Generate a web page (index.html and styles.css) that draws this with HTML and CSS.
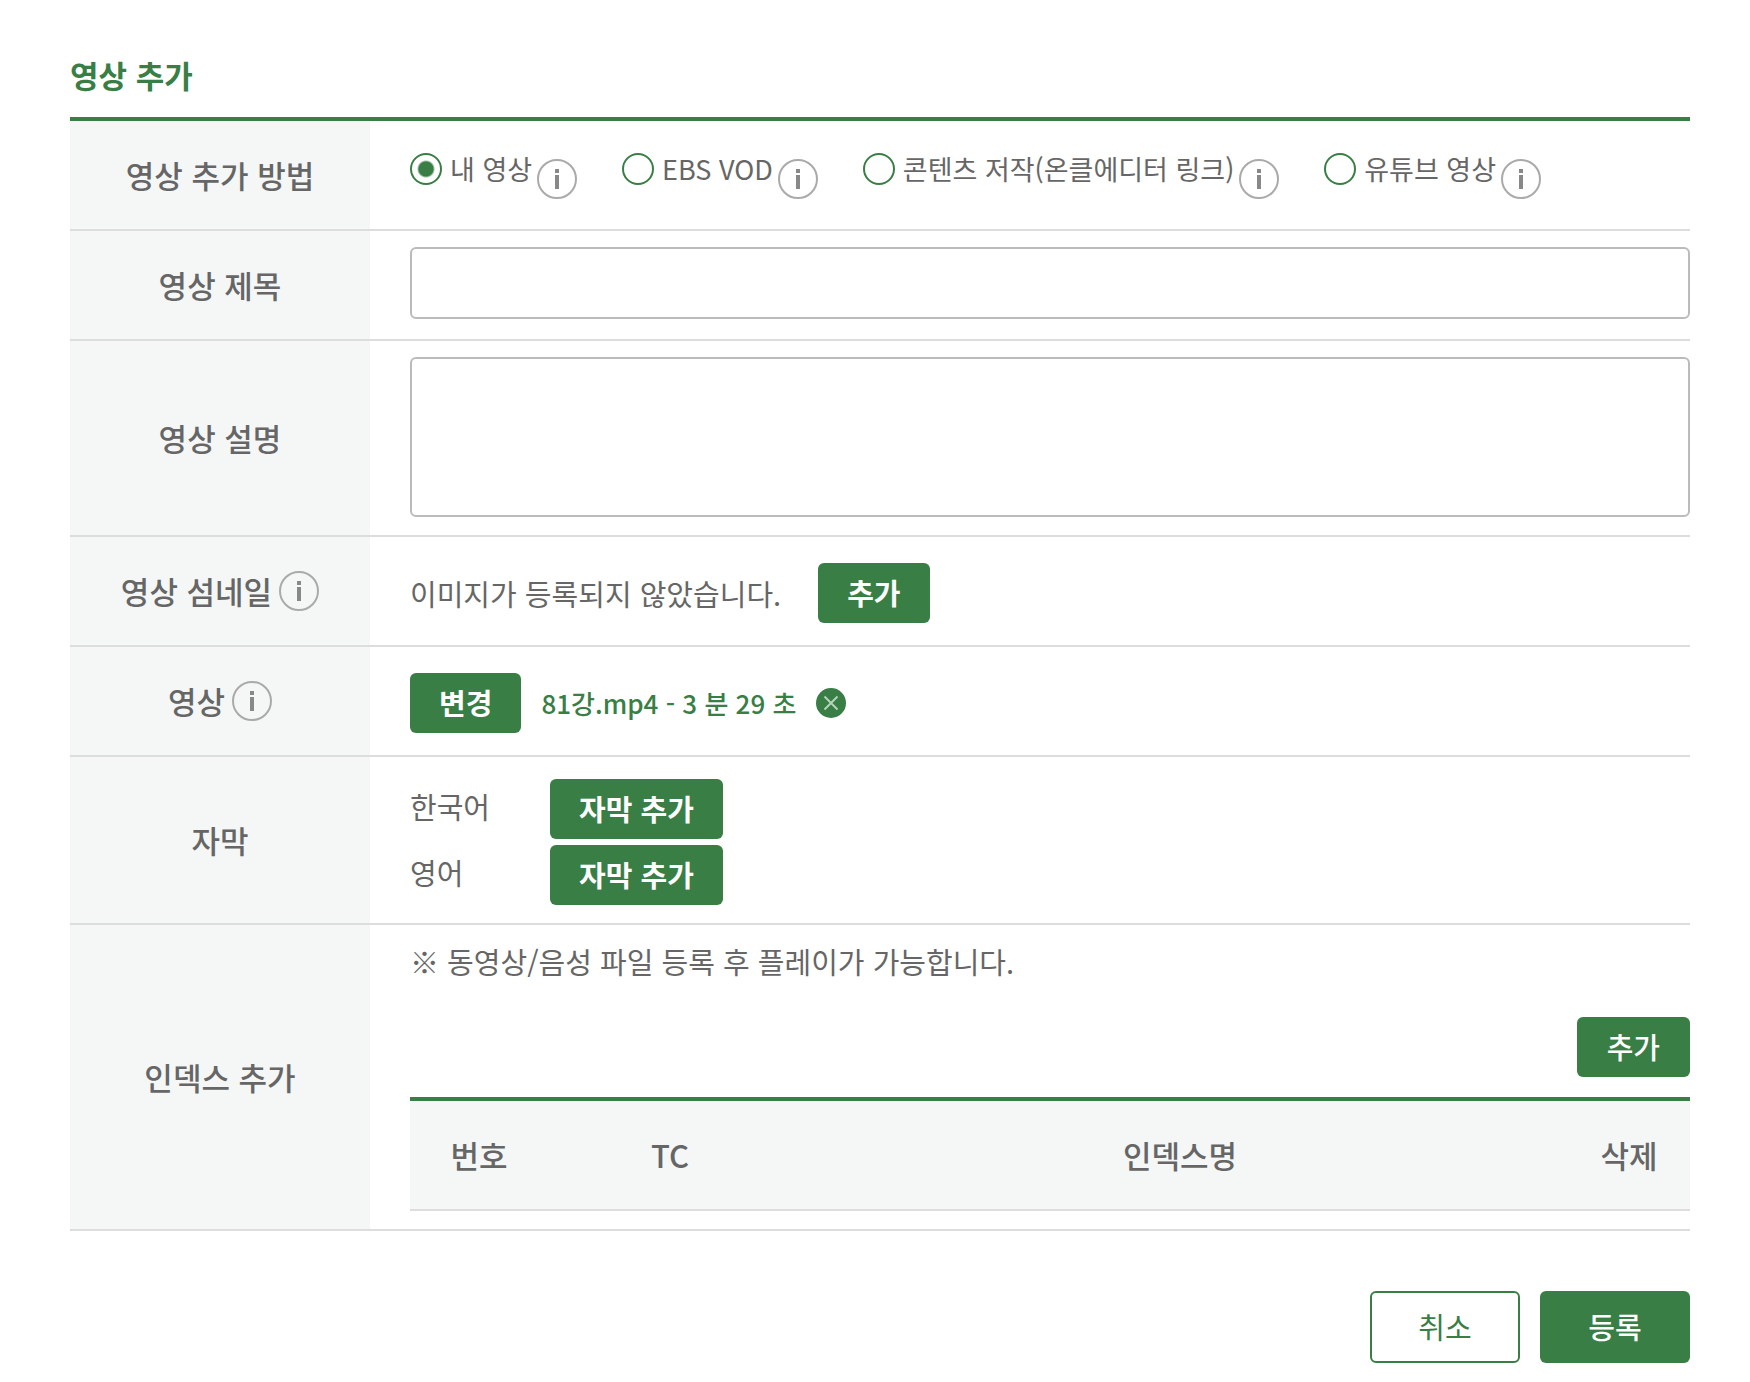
FILE: index.html
```html
<!DOCTYPE html>
<html lang="ko">
<head>
<meta charset="utf-8">
<meta name="viewport" content="width=device-width, initial-scale=1">
<title>영상 추가</title>
<link rel="stylesheet" href="styles.css">
</head>
<body>
<svg class="symbols" aria-hidden="true">
  <symbol id="info" viewBox="0 0 40 40">
    <circle cx="20" cy="20" r="19" fill="none" stroke="#aaa" stroke-width="2"/>
    <path d="M20 10v4M20 16v14" fill="none" stroke="#888" stroke-width="4"/>
  </symbol>
  <symbol id="remove" viewBox="0 0 30 30">
    <circle cx="15" cy="15" r="15" fill="#397e45"/>
    <path d="M8.500 8.500l13 13M21.500 8.500l-13 13" fill="none" stroke="#b5d2ba" stroke-width="2"/>
  </symbol>
</svg>
<main class="page">
  <h1 class="title">영상 추가</h1>
  <form class="form">
    <div class="row">
      <div class="head" id="method-label">영상 추가 방법</div>
      <div class="body methods" role="radiogroup" aria-labelledby="method-label">
        <div class="method">
          <label class="option"><input class="radio" type="radio" name="method" checked>내 영상</label>
          <button class="info" type="button" aria-label="도움말"><svg><use href="#info"/></svg></button>
        </div>
        <div class="method">
          <label class="option"><input class="radio" type="radio" name="method">EBS VOD</label>
          <button class="info" type="button" aria-label="도움말"><svg><use href="#info"/></svg></button>
        </div>
        <div class="method">
          <label class="option"><input class="radio" type="radio" name="method">콘텐츠 저작(온클에디터 링크)</label>
          <button class="info" type="button" aria-label="도움말"><svg><use href="#info"/></svg></button>
        </div>
        <div class="method">
          <label class="option"><input class="radio" type="radio" name="method">유튜브 영상</label>
          <button class="info" type="button" aria-label="도움말"><svg><use href="#info"/></svg></button>
        </div>
      </div>
    </div>
    <div class="row">
      <label class="head" for="video-title">영상 제목</label>
      <div class="body field"><input class="input" id="video-title" type="text"></div>
    </div>
    <div class="row">
      <label class="head" for="video-desc">영상 설명</label>
      <div class="body field"><textarea class="input textarea" id="video-desc"></textarea></div>
    </div>
    <div class="row">
      <div class="head">영상 섬네일<button class="info" type="button" aria-label="도움말"><svg><use href="#info"/></svg></button></div>
      <div class="body media thumb"><span>이미지가 등록되지 않았습니다.</span><button class="btn" type="button">추가</button></div>
    </div>
    <div class="row">
      <div class="head">영상<button class="info" type="button" aria-label="도움말"><svg><use href="#info"/></svg></button></div>
      <div class="body media">
        <button class="btn" type="button">변경</button>
        <span class="file">81강.mp4 - 3 분 29 초</span>
        <button class="remove" type="button" aria-label="삭제"><svg><use href="#remove"/></svg></button>
      </div>
    </div>
    <div class="row">
      <div class="head">자막</div>
      <div class="body captions">
        <div class="caption"><span>한국어</span><button class="btn" type="button">자막 추가</button></div>
        <div class="caption"><span>영어</span><button class="btn" type="button">자막 추가</button></div>
      </div>
    </div>
    <div class="row">
      <div class="head">인덱스 추가</div>
      <div class="body index">
        <p class="note">※ 동영상/음성 파일 등록 후 플레이가 가능합니다.</p>
        <button class="btn light" type="button">추가</button>
        <table class="table">
          <thead>
            <tr><th class="col-no">번호</th><th class="col-tc">TC</th><th>인덱스명</th><th class="col-del">삭제</th></tr>
          </thead>
        </table>
      </div>
    </div>
    <div class="actions">
      <button class="btn large outline" type="button">취소</button>
      <button class="btn large" type="submit">등록</button>
    </div>
  </form>
</main>
</body>
</html>
```
FILE: styles.css
```css
* {
  box-sizing: border-box;
}

body {
  margin: 0;
  background: #fff;
  color: #666;
  font-family: "Noto Sans CJK KR", "Noto Sans", sans-serif;
  font-size: 29px;
  line-height: 40px;
}

button,
input,
textarea {
  margin: 0;
  font: inherit;
}

button {
  padding: 0;
  border: 0;
  background: none;
  cursor: pointer;
}

.symbols {
  display: none;
}

.page {
  padding: 55px 60px 16px 70px;
}

.title {
  margin: 0 0 22px;
  color: #397e45;
  font-size: 31px;
  font-weight: 700;
  line-height: 40px;
}

.form {
  border-top: 4px solid #397e45;
}

.row {
  display: grid;
  grid-template-columns: 300px 1fr;
  border-bottom: 2px solid #ddd;
}

.head {
  display: flex;
  align-items: center;
  justify-content: center;
  gap: 7px;
  background: #f4f7f6;
  font-size: 31px;
  font-weight: 500;
}

.body {
  min-width: 0;
  padding-left: 40px;
}

.info {
  flex: none;
  width: 40px;
  height: 40px;
}

.info svg,
.remove svg {
  display: block;
  width: 100%;
  height: 100%;
}

.methods {
  display: flex;
  flex-wrap: wrap;
  gap: 16px 45px;
  padding-top: 32px;
  padding-bottom: 30px;
}

.method {
  display: flex;
  align-items: flex-start;
  gap: 5px;
}

.method .info {
  margin-top: 6px;
}

.option {
  display: flex;
  align-items: center;
  gap: 8px;
  font-size: 27px;
  line-height: 32px;
}

.radio {
  flex: none;
  width: 32px;
  height: 32px;
  appearance: none;
  border: 2px solid #397e45;
  border-radius: 50%;
  background: #fff;
}

.radio:checked {
  background: radial-gradient(circle, #397e45 7px, #fff 9px);
}

.field {
  padding-top: 16px;
  padding-bottom: 20px;
}

.input {
  display: block;
  width: 100%;
  height: 72px;
  padding: 0 20px;
  border: 2px solid #bbb;
  border-radius: 6px;
  background: #fff;
  color: #666;
}

.textarea {
  height: 160px;
  margin-bottom: -2px;
  padding: 16px 20px;
  resize: none;
}

.media {
  display: flex;
  align-items: center;
  gap: 20px;
  padding-top: 26px;
  padding-bottom: 22px;
}

.thumb {
  gap: 37px;
}

.btn {
  height: 60px;
  padding: 0 29px 3px;
  border-radius: 6px;
  background: #397e45;
  color: #fff;
  font-weight: 700;
}

.file {
  color: #397e45;
  font-size: 26px;
  font-weight: 500;
}

.remove {
  width: 30px;
  height: 30px;
}

.captions {
  display: grid;
  gap: 6px;
  padding-top: 22px;
  padding-bottom: 18px;
}

.caption {
  display: grid;
  grid-template-columns: 140px max-content;
  line-height: 54px;
}

.index {
  display: flex;
  flex-direction: column;
  align-items: flex-end;
  padding-top: 16px;
  padding-bottom: 18px;
}

.note {
  align-self: flex-start;
  margin: 0 0 36px;
}

.light {
  padding: 0 30px 3px;
  font-weight: 500;
}

.table {
  width: 100%;
  margin-top: 20px;
  border-collapse: separate;
  border-spacing: 0;
  border-top: 4px solid #397e45;
  table-layout: fixed;
}

.table th {
  height: 110px;
  padding: 0;
  border-bottom: 2px solid #ddd;
  background: #f4f7f6;
  font-size: 31px;
  font-weight: 500;
}

.col-no {
  width: 138px;
}

.col-tc {
  width: 244px;
}

.col-del {
  width: 122px;
}

.actions {
  display: flex;
  justify-content: flex-end;
  gap: 20px;
  padding-top: 60px;
}

.large {
  width: 150px;
  height: 72px;
  padding: 0 0 3px;
  font-weight: 500;
}

.outline {
  border: 2px solid #397e45;
  background: #fff;
  color: #397e45;
  font-weight: 400;
}
```
